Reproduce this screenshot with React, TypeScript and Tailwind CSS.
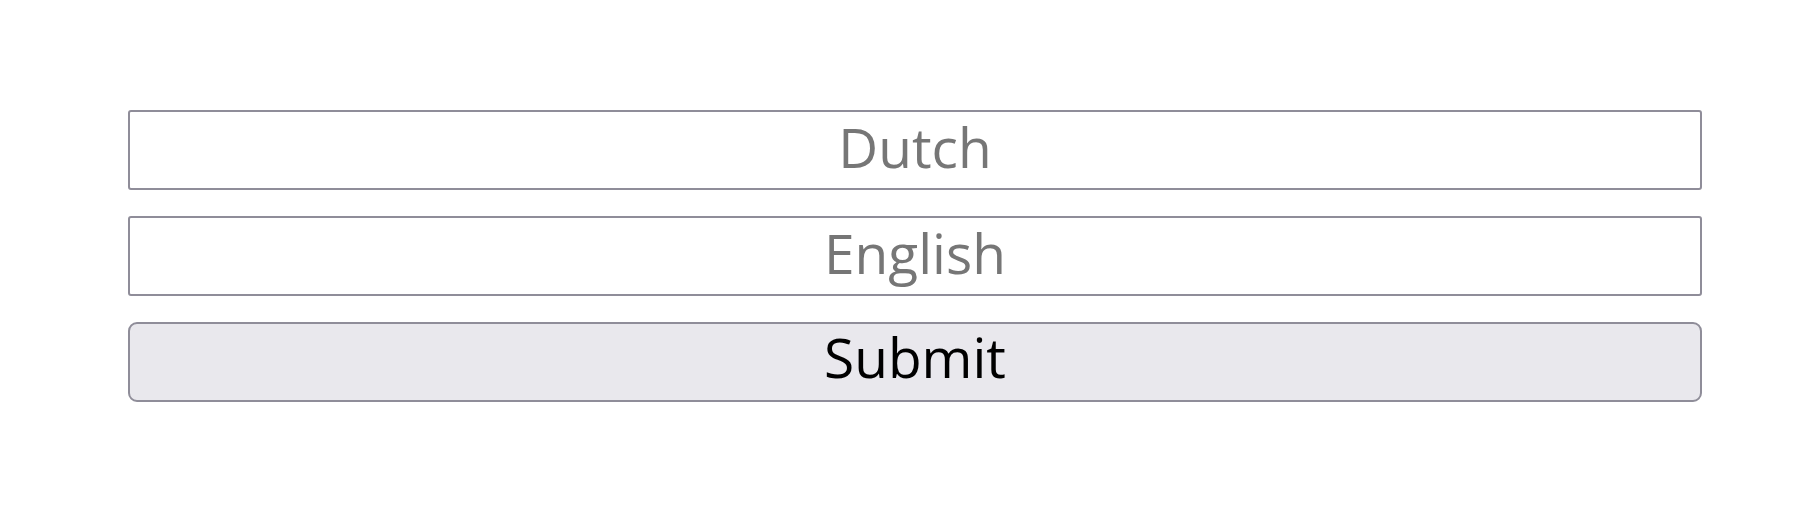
import React, { useState } from 'react';

export default function App() {
  const [dutch, setDutch] = useState('');
  const [english, setEnglish] = useState('');

  return (
    <div className="min-h-[512px] w-full bg-white" style={{ fontFamily: '"Open Sans", "Noto Sans", sans-serif' }}>
      <form
        className="flex flex-col gap-[26px] pt-[110px] ml-[128px] mr-[118px]"
        onSubmit={e => e.preventDefault()}
      >
        <input
          type="text"
          value={dutch}
          onChange={e => setDutch(e.target.value)}
          placeholder="Dutch"
          className="h-[80px] w-full rounded-[3px] border-2 border-[#8f8d99] bg-white pb-[5px] text-center text-[55px] text-black placeholder-[#767676] outline-none"
        />
        <input
          type="text"
          value={english}
          onChange={e => setEnglish(e.target.value)}
          placeholder="English"
          className="h-[80px] w-full rounded-[3px] border-2 border-[#8f8d99] bg-white pb-[5px] text-center text-[55px] text-black placeholder-[#767676] outline-none"
        />
        <button
          type="submit"
          className="h-[80px] w-full rounded-[9px] border-2 border-[#8f8d99] bg-[#e9e8ed] pb-[12px] text-center text-[55px] leading-none text-black"
        >
          Submit
        </button>
      </form>
    </div>
  );
}
